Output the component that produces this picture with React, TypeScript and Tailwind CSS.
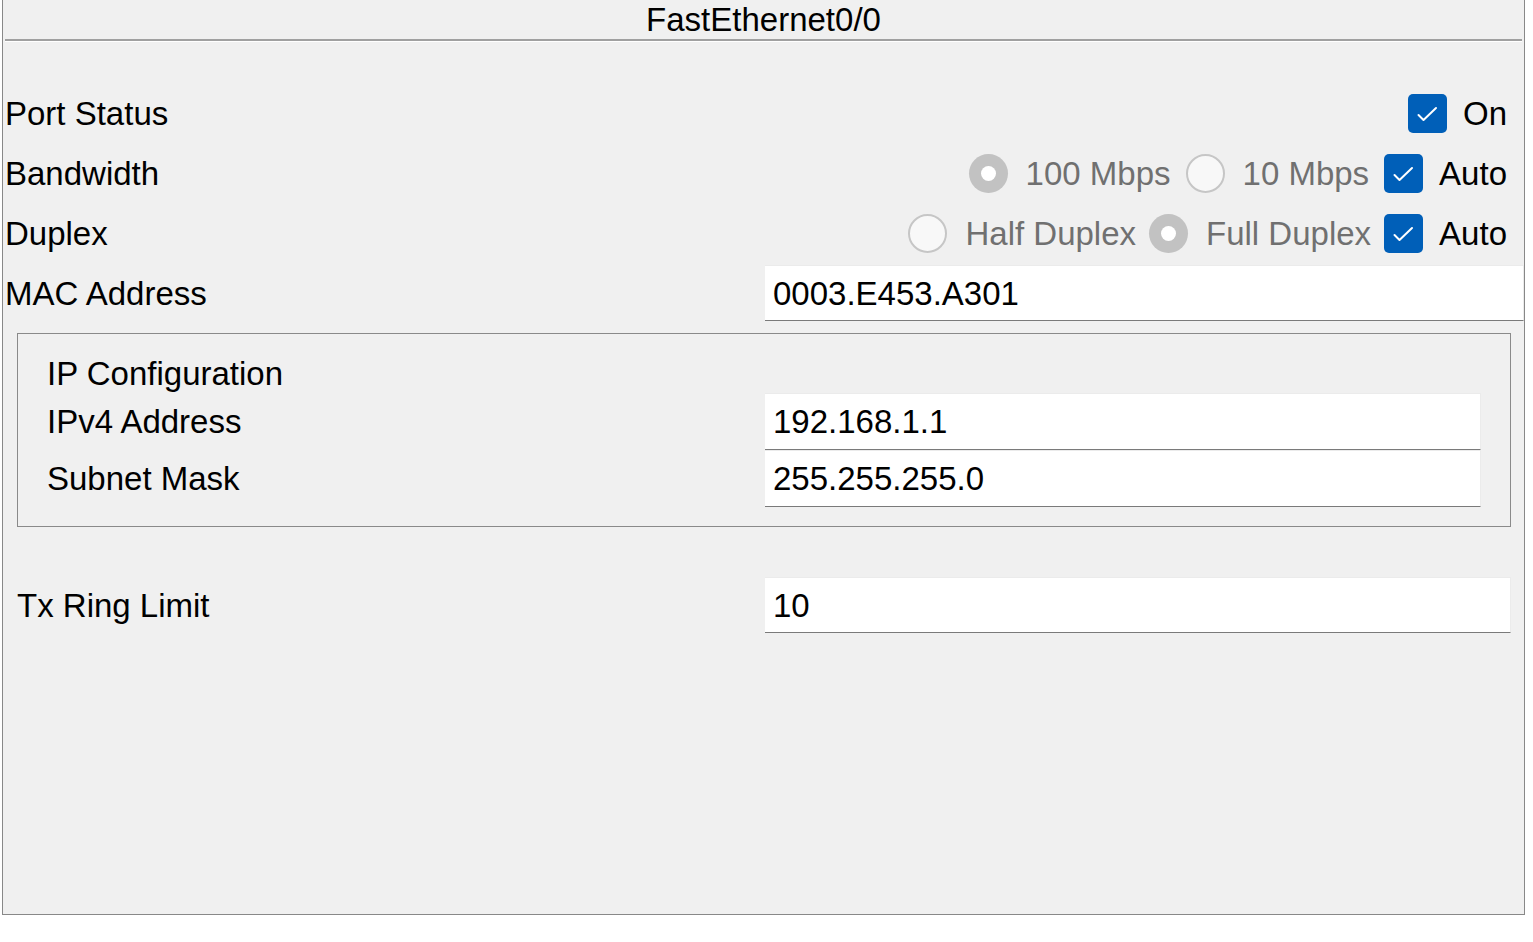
import React from 'react';

const font = { fontFamily: '"Liberation Sans", Arial, sans-serif' };

const Check: React.FC = () => (
  <span className="flex h-[39px] w-[39px] items-center justify-center rounded-[5px] bg-[#005fb8]">
    <svg width="39" height="39" viewBox="0 0 39 39" fill="none">
      <path d="M10.5 21 L15.5 26 L28 14" stroke="#ffffff" strokeWidth="2" strokeLinecap="round" strokeLinejoin="round" />
    </svg>
  </span>
);

const Radio: React.FC<{ checked?: boolean }> = ({ checked }) =>
  checked ? (
    <span className="flex h-[39px] w-[39px] items-center justify-center rounded-full bg-[#c2c2c2]">
      <span className="h-[15px] w-[15px] rounded-full bg-white" />
    </span>
  ) : (
    <span className="h-[39px] w-[39px] rounded-full border-2 border-[#c6c6c6] bg-[#f8f8f8]" />
  );

const Field: React.FC<{ value: string; className: string }> = ({ value, className }) => (
  <div
    className={`flex items-center border-t border-r border-[#ebebeb] border-b border-b-[#7a7a7a] bg-white pl-[8px] text-[33px] leading-none text-black ${className}`}
  >
    {value}
  </div>
);

const Label: React.FC<{ children: React.ReactNode; className: string }> = ({ children, className }) => (
  <div className={`text-[33px] leading-none text-black ${className}`}>{children}</div>
);

const Option: React.FC<{ label: string; checked?: boolean }> = ({ label, checked }) => (
  <div className="flex items-center gap-[18px]">
    <Radio checked={checked} />
    <span className="text-[#707070]">{label}</span>
  </div>
);

export default function App() {
  return (
    <div className="min-h-screen bg-white" style={font}>
      <div className="ml-[2px] flex h-[915px] w-[1523px] flex-col border-x border-b border-[#888888] bg-[#f0f0f0]">
        <div className="flex h-[39px] items-center justify-center text-[33px] leading-none text-black">
          FastEthernet0/0
        </div>
        <div className="mx-[2px] h-[2px] bg-[#a0a0a0]" />
        <div className="mx-[2px] h-[1px] bg-white" />

        <div className="mt-[41px] flex flex-col pl-[2px]">
          <div className="flex h-[60px] items-center justify-between pr-[17px]">
            <Label className="">Port Status</Label>
            <div className="flex items-center gap-[16px] pl-[1px] text-[33px] leading-none">
              <Check />
              <span>On</span>
            </div>
          </div>

          <div className="flex h-[60px] items-center justify-between pr-[17px]">
            <Label className="">Bandwidth</Label>
            <div className="flex items-center gap-[15px] text-[33px] leading-none">
              <Option label="100 Mbps" checked />
              <Option label="10 Mbps" />
              <div className="flex items-center gap-[16px]">
                <Check />
                <span>Auto</span>
              </div>
            </div>
          </div>

          <div className="flex h-[60px] items-center justify-between pr-[17px]">
            <Label className="">Duplex</Label>
            <div className="flex items-center gap-[13px] text-[33px] leading-none">
              <Option label="Half Duplex" />
              <Option label="Full Duplex" checked />
              <div className="flex items-center gap-[16px]">
                <Check />
                <span>Auto</span>
              </div>
            </div>
          </div>

          <div className="flex h-[60px] items-center">
            <Label className="w-[760px]">MAC Address</Label>
            <Field value="0003.E453.A301" className="h-[56px] flex-1" />
          </div>
        </div>

        <div className="mt-[10px] ml-[14px] w-[1494px] border border-[#8a8a8a] pt-[19px] pb-[19px] pl-[29px] pr-[29px]">
          <Label className="flex h-[40px] items-center">IP Configuration</Label>
          <div className="flex h-[57px] items-center">
            <Label className="w-[718px]">IPv4 Address</Label>
            <Field value="192.168.1.1" className="h-[57px] flex-1" />
          </div>
          <div className="flex h-[57px] items-center">
            <Label className="w-[718px]">Subnet Mask</Label>
            <Field value="255.255.255.0" className="h-[57px] flex-1" />
          </div>
        </div>

        <div className="mt-[50px] flex h-[56px] items-center pl-[14px] pr-[13px]">
          <Label className="w-[748px]">Tx Ring Limit</Label>
          <Field value="10" className="h-[56px] flex-1" />
        </div>
      </div>
    </div>
  );
}
